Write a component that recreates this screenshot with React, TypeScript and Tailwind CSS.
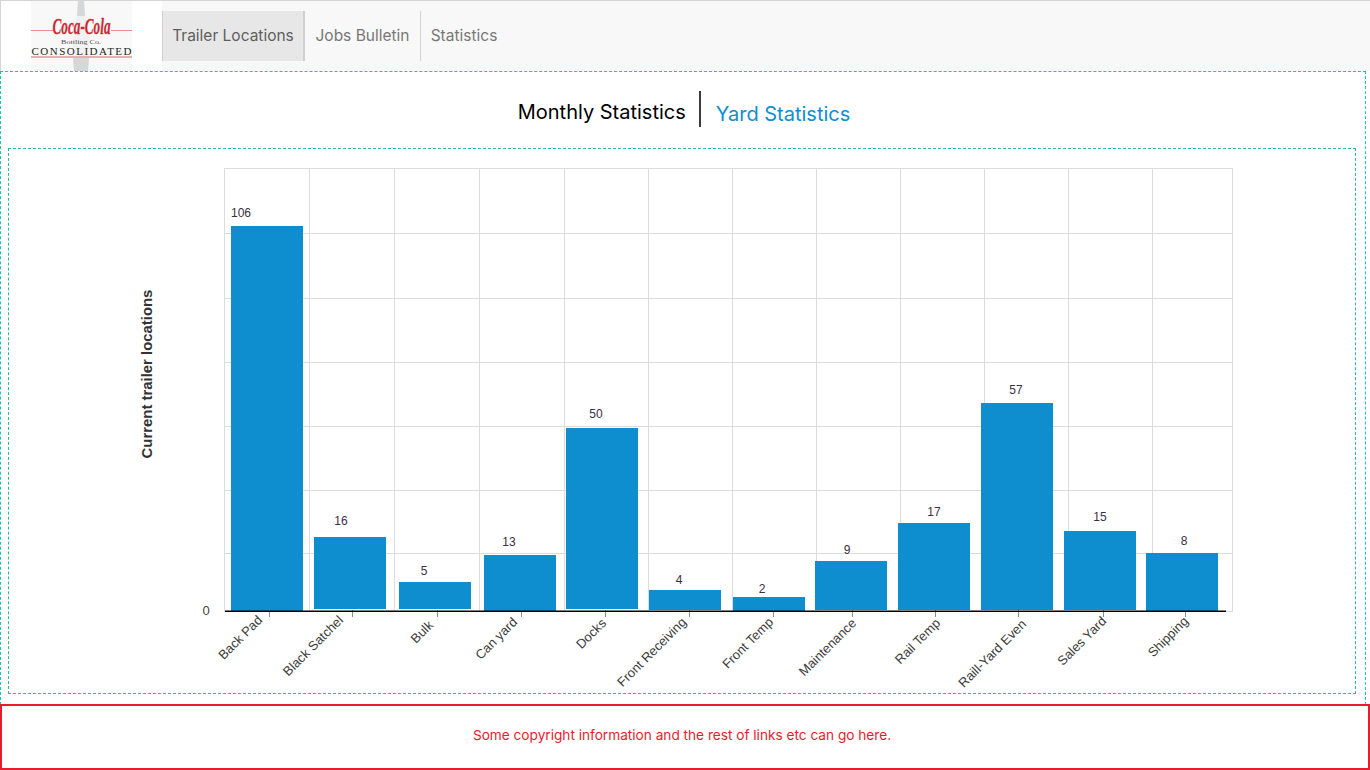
import React from 'react';

const montserrat = "font-['Inter','Noto_Sans',sans-serif]";

const BARS = [
  { name: 'Back Pad', value: 106, x: 231, top: 226, bottom: 611, labelX: 241, labelY: 212, tick: 269, endX: 263, endY: 621 },
  { name: 'Black Satchel', value: 16, x: 314, top: 537, bottom: 609, labelX: 341, labelY: 520, tick: 352, endX: 344, endY: 621 },
  { name: 'Bulk', value: 5, x: 399, top: 582, bottom: 609, labelX: 424, labelY: 570, tick: 437, endX: 434, endY: 626 },
  { name: 'Can yard', value: 13, x: 484, top: 555, bottom: 611, labelX: 509, labelY: 541, tick: 521, endX: 518, endY: 623 },
  { name: 'Docks', value: 50, x: 566, top: 428, bottom: 609, labelX: 596, labelY: 413, tick: 605, endX: 607, endY: 624 },
  { name: 'Front Receiving', value: 4, x: 649, top: 590, bottom: 610, labelX: 679, labelY: 579, tick: 689, endX: 687, endY: 623 },
  { name: 'Front Temp', value: 2, x: 733, top: 597, bottom: 611, labelX: 762, labelY: 588, tick: 773, endX: 774, endY: 623 },
  { name: 'Maintenance', value: 9, x: 815, top: 561, bottom: 610, labelX: 847, labelY: 549, tick: 852, endX: 857, endY: 624 },
  { name: 'Rail Temp', value: 17, x: 898, top: 523, bottom: 610, labelX: 934, labelY: 511, tick: 935, endX: 941, endY: 624 },
  { name: 'Raill-Yard Even', value: 57, x: 981, top: 403, bottom: 610, labelX: 1016, labelY: 389, tick: 1018, endX: 1027, endY: 625 },
  { name: 'Sales Yard', value: 15, x: 1064, top: 531, bottom: 610, labelX: 1100, labelY: 516, tick: 1103, endX: 1107, endY: 622 },
  { name: 'Shipping', value: 8, x: 1146, top: 553, bottom: 611, labelX: 1184, labelY: 540, tick: 1185, endX: 1189, endY: 622 },
];

const GRID_X = [224, 309, 394, 479, 564, 648, 732, 816, 900, 984, 1068, 1152, 1232];
const GRID_Y = [168, 233, 298, 362, 426, 490, 553, 611];

function Logo() {
  return (
    <svg width="101" height="70" viewBox="0 0 101 70" className="block overflow-visible">
      <rect width="101" height="70" fill="#f8f8f8" />
      {/* bottle behind the lettering */}
      <path d="M47 0h6l1 14 2 10 2 12v22l-1 12H43l-1-12V36l2-12 2-10z" fill="#d6d7d8" />
      <rect x="8" y="15" width="84" height="41" fill="#f8f8f8" opacity="0.8" />
      <rect x="0" y="29" width="22" height="1" fill="#e58f92" />
      <rect x="80" y="29" width="21" height="1" fill="#e58f92" />
      <rect x="0" y="55" width="101" height="2" fill="#e8aeb0" />
      <text x="50.5" y="33" textAnchor="middle" fontFamily="'Liberation Serif', serif" fontStyle="italic" fontWeight="700" fontSize="23" fill="#cc2a32" stroke="#cc2a32" strokeWidth="0.3" textLength="58" lengthAdjust="spacingAndGlyphs">Coca-Cola</text>
      <text x="50" y="43" textAnchor="middle" fontFamily="'Liberation Serif', serif" fontSize="7" fill="#55504f" textLength="40" lengthAdjust="spacingAndGlyphs">Bottling Co.</text>
      <text x="50.5" y="53.5" textAnchor="middle" fontFamily="'Liberation Serif', serif" fontSize="11" fill="#231f20" textLength="100" lengthAdjust="spacing">CONSOLIDATED</text>
    </svg>
  );
}

function Chart() {
  return (
    <svg width="1346" height="544" viewBox="9 149 1346 544" className="block">
      {GRID_X.map((x) => (
        <line key={x} x1={x + 0.5} x2={x + 0.5} y1={168} y2={612} stroke="#dcdcdc" />
      ))}
      {GRID_Y.map((y) => (
        <line key={y} x1={224} x2={1233} y1={y + 0.5} y2={y + 0.5} stroke="#dcdcdc" />
      ))}
      {BARS.map((b) => (
        <g key={b.name}>
          <rect x={b.x} y={b.top} width={72} height={b.bottom - b.top} fill="#0e8ecf" />
          <line x1={b.tick + 0.5} x2={b.tick + 0.5} y1={610} y2={617} stroke="#8c8c8c" />
          <text
            x={b.labelX}
            y={b.labelY + 5}
            textAnchor="middle"
            fontSize="13.5"
            fontFamily="'Liberation Sans', sans-serif"
            fill="#3a2f3f"
            textLength={String(b.value).length * 6.7}
            lengthAdjust="spacingAndGlyphs"
          >
            {b.value}
          </text>
          <text
            transform={`translate(${b.endX} ${b.endY}) rotate(-45)`}
            textAnchor="end"
            fontSize="13"
            fontFamily="'Liberation Sans', sans-serif"
            fill="#3c3c3c"
          >
            {b.name}
          </text>
        </g>
      ))}
      <rect x={225} y={610.5} width={1001} height={1.5} fill="#000" />
      <text x={206} y={615} textAnchor="middle" fontSize="13" fontFamily="'Liberation Sans', sans-serif" fill="#444">0</text>
      <text
        transform="translate(152 374) rotate(-90)"
        textAnchor="middle"
        fontSize="14.9"
        fontWeight="700"
        fontFamily="'Liberation Sans', sans-serif"
        fill="#333"
      >
        Current trailer locations
      </text>
    </svg>
  );
}

export default function App() {
  return (
    <div className={`w-[1370px] h-[770px] overflow-hidden bg-white ${montserrat}`}>
      {/* Top nav */}
      <nav className="h-[71px] flex border-t border-l border-[#d4d4d4] bg-[#f8f8f8]">
        <div className="w-[161px] h-[70px] bg-white pl-[30px]">
          <Logo />
        </div>
        <div className="flex h-[50px] mt-[10px] text-[15.5px]">
          <a className="w-[143px] flex items-center justify-center bg-[#e7e7e7] text-[#5e5e5e] border-l border-r-2 border-[#cfcfcf]">Trailer Locations</a>
          <a className="w-[116px] flex items-center justify-center text-[#777] border-r border-[#d4d4d4]">Jobs Bulletin</a>
          <a className="w-[86px] flex items-center justify-center text-[#777]">Statistics</a>
        </div>
      </nav>

      {/* Main */}
      <main className="w-[1366px] h-[634px] border border-dashed border-[#17c4c4] px-[7px]">
        <div className="h-[76px] flex items-start justify-center pt-[19px] pl-[2px]">
          <h2 className="text-[20px] leading-[36px] text-black pr-[13px] pt-[3px]">Monthly Statistics</h2>
          <div className="w-[2px] h-[36px] bg-[#3c3c3c]" />
          <a className="text-[20px] leading-[36px] text-[#0e8ecf] pl-[15px] pt-[5px]">Yard Statistics</a>
        </div>
        <div className="w-[1348px] h-[546px] border border-dashed border-[#2ab8b0]">
          <Chart />
        </div>
      </main>

      {/* Footer */}
      <footer className="w-[1370px] h-[66px] -mt-[1px] pb-[4px] pr-[6px] border-2 border-[#e81c2c] flex items-center justify-center text-[13.65px] text-[#e81c2c]">
        Some copyright information and the rest of links etc can go here.
      </footer>
    </div>
  );
}
